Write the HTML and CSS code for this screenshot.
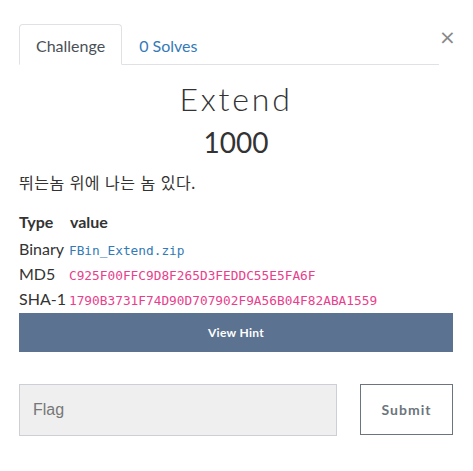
FILE: index.html
```html
<!DOCTYPE html>
<html lang="ko">
<head>
<meta charset="utf-8">
<link rel="stylesheet" href="styles.css">
</head>
<body>
<div class="modal">
  <div class="top">
    <ul class="tabs">
      <li class="tab active">Challenge</li>
      <li class="tab link">0 Solves</li>
    </ul>
    <span class="close">&times;</span>
  </div>
  <h3 class="name">Extend</h3>
  <h4 class="value">1000</h4>
  <p class="desc">뛰는놈 위에 나는 놈 있다.</p>
  <div class="info">
    <div class="th">Type</div><div class="th">value</div>
    <div class="td">Binary</div><div class="td"><code class="file">FBin_Extend.zip</code></div>
    <div class="td">MD5</div><div class="td"><code class="hash">C925F00FFC9D8F265D3FEDDC55E5FA6F</code></div>
    <div class="td">SHA-1</div><div class="td"><code class="hash">1790B3731F74D90D707902F9A56B04F82ABA1559</code></div>
  </div>
  <button class="hint">View Hint</button>
  <div class="submit-row">
    <div class="flag">Flag</div>
    <button class="submit">Submit</button>
  </div>
</div>
</body>
</html>
```
FILE: styles.css
```css
* { box-sizing: border-box; }
body {
  margin: 0;
  background: #fff;
  font-family: Lato, "Noto Sans CJK KR", sans-serif;
  font-size: 16px;
  color: #333;
}
.modal {
  width: 434px;
  margin-left: 19px;
  padding-top: 24px;
}
.top {
  display: flex;
  align-items: flex-start;
}
.tabs {
  list-style: none;
  margin: 0;
  padding: 0;
  display: flex;
  flex: 1;
  border-bottom: 1px solid #dee2e6;
}
.tab {
  height: 41px;
  padding: 0 16px;
  line-height: 41px;
  font-size: 16px;
  border: 1px solid transparent;
  border-radius: 4px 4px 0 0;
  margin-bottom: -1px;
}
.tab.active {
  color: #495057;
  background: #fff;
  border-color: #dee2e6 #dee2e6 #fff;
}
.tab.link {
  color: #337ab7;
}
.close {
  width: 14px;
  text-align: right;
  font-family: "DejaVu Sans", sans-serif;
  font-size: 20px;
  line-height: 20px;
  margin-top: 3px;
  color: #888;
}
.name {
  margin: 15px 0 0;
  text-align: center;
  font-size: 32px;
  font-weight: 300;
  line-height: 1.2;
  letter-spacing: 2.8px;
  color: #333;
}
.value {
  margin: 8px 0 0;
  text-align: center;
  font-size: 28px;
  font-weight: 400;
  line-height: 1.2;
  color: #333;
}
.desc {
  margin: 11px 0 0;
  font-family: "Noto Sans CJK KR", sans-serif;
  font-size: 16px;
  letter-spacing: 0.5px;
  line-height: 22px;
  color: #333;
}
.info {
  display: grid;
  grid-template-columns: auto 1fr;
  column-gap: 3px;
  margin-top: 16px;
}
.th {
  font-weight: 700;
  height: 27px;
  line-height: 25px;
}
.th:nth-child(2) { padding-left: 1px; }
.td {
  height: 25px;
  line-height: 25px;
}
code {
  font-family: "DejaVu Sans Mono", monospace;
  font-size: 12.8px;
}
.file { color: #337ab7; }
.hash { color: #e83e8c; }
.hint {
  display: block;
  width: 100%;
  height: 39px;
  margin-top: 2px;
  border: 0;
  background: #5b7290;
  color: #fff;
  font-family: Lato, sans-serif;
  font-weight: 700;
  font-size: 12px;
  letter-spacing: 0.3px;
}
.submit-row {
  display: flex;
  justify-content: space-between;
  align-items: flex-start;
  margin-top: 32px;
}
.flag {
  width: 318px;
  height: 52px;
  background: #efefef;
  border: 1px solid #ccd0d6;
  font-family: "Liberation Sans", Arial, sans-serif;
  font-size: 16px;
  line-height: 50px;
  padding-left: 13px;
  color: #777;
}
.submit {
  width: 93px;
  height: 51px;
  background: #fff;
  border: 1px solid #6c757d;
  color: #6c757d;
  font-family: Lato, sans-serif;
  font-weight: 700;
  font-size: 14px;
  letter-spacing: 1px;
}
```
